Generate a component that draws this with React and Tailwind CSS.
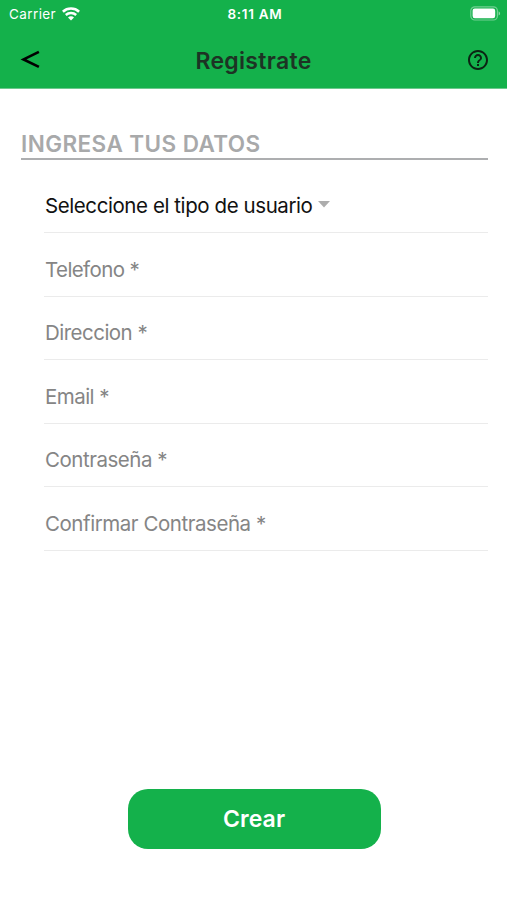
import React, { useState } from "react";

const campos = [
    { name: "telefono", label: "Telefono *", type: "tel", tracking: "tracking-[-0.6px]" },
    { name: "direccion", label: "Direccion *", type: "text", tracking: "tracking-[-0.52px]" },
    { name: "email", label: "Email *", type: "email", tracking: "tracking-[-0.55px]" },
    { name: "contrasena", label: "Contraseña *", type: "password", tracking: "tracking-[-0.48px]" },
    { name: "confirmar", label: "Confirmar Contraseña *", type: "password", tracking: "tracking-[-0.45px]" },
];

function WifiIcon() {
    return (
        <svg width="18" height="14" viewBox="0 0 18 14" fill="none" className="-mt-px">
            <path d="M0.9 4.7C5.4 0.5 12.6 0.5 17.1 4.7" stroke="white" strokeWidth="2.6" />
            <path d="M3.8 8C6.7 5.3 11.3 5.3 14.2 8" stroke="white" strokeWidth="2.4" />
            <path d="M9 13.4L6 10.5C7.6 8.9 10.4 8.9 12 10.5Z" fill="white" />
        </svg>
    );
}

function BatteryIcon() {
    return (
        <svg width="31" height="15" viewBox="0 0 31 15" fill="none" className="-mt-px">
            <rect x="0.8" y="0.8" width="26.6" height="13.2" rx="4" stroke="white" strokeOpacity="0.4" strokeWidth="1.2" />
            <rect x="2.6" y="2.6" width="22.6" height="9.6" rx="2.2" fill="white" />
            <path d="M28.6 5.2C30.6 6 30.6 8.8 28.6 9.6Z" fill="white" fillOpacity="0.5" />
        </svg>
    );
}

function HelpIcon() {
    return (
        <svg width="24" height="24" viewBox="0 0 24 24" fill="#0b2413">
            <path d="M11 18h2v-2h-2v2zm1-16C6.48 2 2 6.48 2 12s4.48 10 10 10 10-4.48 10-10S17.52 2 12 2zm0 18c-4.41 0-8-3.59-8-8s3.59-8 8-8 8 3.59 8 8-3.59 8-8 8zm0-14c-2.21 0-4 1.79-4 4h2c0-1.1.9-2 2-2s2 .9 2 2c0 2-3 1.75-3 5h2c0-2.25 3-2.5 3-5 0-2.21-1.79-4-4-4z" />
        </svg>
    );
}

function App() {
    const [form, setForm] = useState({});

    const handleChange = (e) => {
        setForm({ ...form, [e.target.name]: e.target.value });
    };

    return (
        <div className="flex h-[900px] w-[507px] flex-col overflow-hidden bg-white font-['Inter','Liberation_Sans',sans-serif]">
            <header className="h-[89px] border-b border-[#6cc98d] bg-[#14b14b]">
                {/* Status bar */}
                <div className="grid h-[27px] grid-cols-3 items-center pr-[6px] pl-[9px] text-white">
                    <div className="flex items-center gap-[6px]">
                        <span className="text-[13.5px] leading-7 tracking-[0.4px]">Carrier</span>
                        <WifiIcon />
                    </div>
                    <span className="text-center text-[13.5px] leading-7 font-semibold tracking-[0.7px]">8:11 AM</span>
                    <div className="flex justify-end">
                        <BatteryIcon />
                    </div>
                </div>

                {/* Nav bar */}
                <div className="grid h-[61px] grid-cols-[60px_1fr_60px] items-center pt-[6px]">
                    <button aria-label="Volver" className="pb-[2px] pl-[20px]">
                        <svg width="20" height="20" viewBox="0 0 20 20" fill="none">
                            <path d="M18.9 1.9L3.6 9.4L18.9 16.9" stroke="black" strokeWidth="2.7" />
                        </svg>
                    </button>
                    <h1 className="pt-px text-center text-[23px] leading-7 font-semibold tracking-[0.3px] text-[#1d3324]">Registrate</h1>
                    <button aria-label="Ayuda" className="flex justify-end pr-[17px] pb-[2px]">
                        <HelpIcon />
                    </button>
                </div>
            </header>

            <main className="flex flex-1 flex-col pr-[19px] pl-[21px]">
                <h2 className="mt-[40px] h-[30.5px] border-b-2 border-[#adaeb0] text-[22.5px] leading-[29px] font-semibold tracking-[0.42px] text-[#a8a9aa]">
                    INGRESA TUS DATOS
                </h2>

                <form className="ml-[23px] pt-[9.5px]">
                    <button type="button" className="flex h-[64px] w-full items-center gap-[6px] border-b border-[#ebebeb] pt-[10px] pl-px text-left">
                        <span className="text-[20.5px] leading-7 tracking-[-0.42px] text-[#111]">Seleccione el tipo de usuario</span>
                        <svg width="12" height="7" viewBox="0 0 12 7" fill="#adadad" className="-mt-[2px]">
                            <path d="M0 0H12L6 6.5Z" />
                        </svg>
                    </button>
                    {campos.map((c) => (
                        <input
                            key={c.name}
                            name={c.name}
                            type={c.type}
                            placeholder={c.label}
                            value={form[c.name] || ""}
                            onChange={handleChange}
                            className={`block h-[63.5px] w-full border-b border-[#ebebeb] pt-[10px] pl-px text-[20.5px] outline-none placeholder:text-[#858585] ${c.tracking}`}
                        />
                    ))}
                </form>
            </main>

            <footer className="flex justify-center pb-[51px]">
                <button className="mr-px ml-0.5 h-[60px] w-[253px] rounded-[20px] bg-[#14b14b] text-[23px] font-semibold tracking-[0.1px] text-white">
                    Crear
                </button>
            </footer>
        </div>
    );
}

export default App;
